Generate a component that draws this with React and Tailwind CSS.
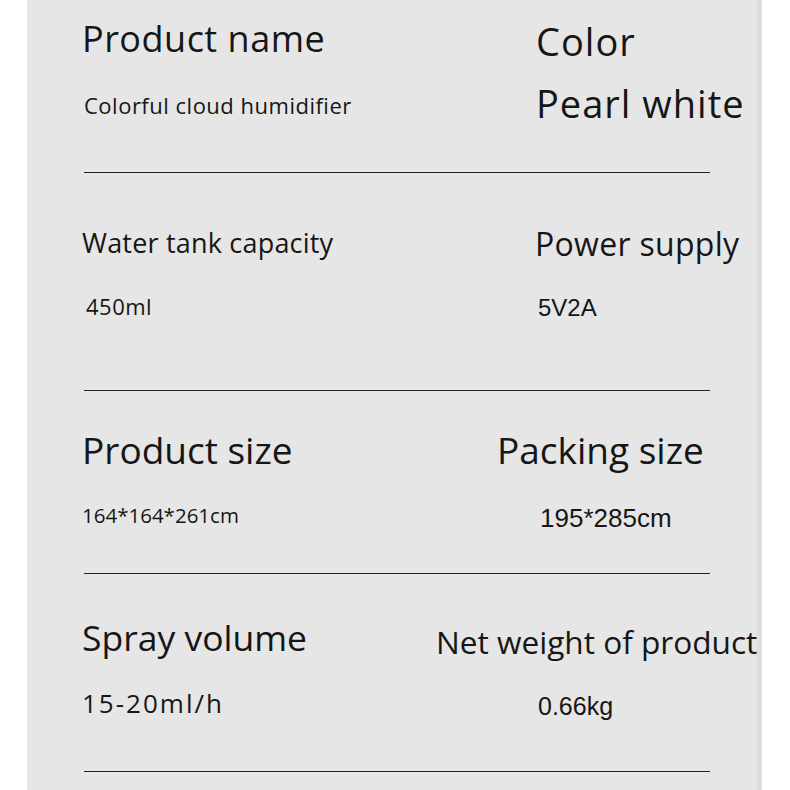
import React from 'react';

const specs = [
  {
    h: 'h-[172px]',
    left: { title: 'Product name', tCls: 'mt-[21px] text-[36px] tracking-[0.5px]', value: 'Colorful cloud humidifier', vCls: 'mt-[37px] ml-[2px] text-[22px] tracking-[0.5px]' },
    right: { title: 'Color', tCls: 'mt-[22px] ml-[100px] text-[38px] tracking-[1px]', value: 'Pearl white', vCls: 'mt-[24px] ml-[100px] text-[38px] tracking-[1px]', arial: false },
  },
  {
    h: 'h-[217px]',
    left: { title: 'Water tank capacity', tCls: 'mt-[56px] text-[27px] tracking-[0.2px]', value: '450ml', vCls: 'mt-[39px] ml-[4px] text-[22px] tracking-[0.5px]' },
    right: { title: 'Power supply', tCls: 'mt-[55px] ml-[99px] text-[32px] tracking-[0.3px]', value: '5V2A', vCls: 'mt-[36px] ml-[102px] text-[24px]', arial: true },
  },
  {
    h: 'h-[182px]',
    left: { title: 'Product size', tCls: 'mt-[40px] text-[37px]', value: '164*164*261cm', vCls: 'mt-[37px] text-[20.5px]' },
    right: { title: 'Packing size', tCls: 'mt-[40px] ml-[61px] text-[37px]', value: '195*285cm', vCls: 'mt-[37px] ml-[104px] text-[26px]', arial: true },
  },
  {
    h: 'h-[197px]',
    left: { title: 'Spray volume', tCls: 'mt-[46px] text-[35.5px]', value: '15-20ml/h', vCls: 'mt-[34px] text-[26px] tracking-[2px]' },
    right: { title: 'Net weight of product', tCls: 'mt-[52px] text-[31.6px]', value: '0.66kg', vCls: 'mt-[36px] ml-[102px] text-[25px]', arial: true },
  },
];

const sans = "font-['Open_Sans',sans-serif]";
const arial = "font-['Liberation_Sans',Arial,sans-serif]";

export default function App() {
  return (
    <div className="flex w-[790px] h-[790px] bg-white text-[#161616] overflow-hidden">
      <div className="w-[27px] shrink-0" />
      <div className="w-[735px] shrink-0 h-full bg-[#e6e6e6] border-r-[5px] border-[#dddddd] pl-[55px]">
        {specs.map((row, i) => (
          <div key={i}>
            <div className={`flex ${row.h}`}>
              <div className="w-[354px] shrink-0 flex flex-col items-start">
                <div className={`${sans} leading-none whitespace-nowrap ${row.left.tCls}`}>{row.left.title}</div>
                <div className={`${sans} leading-none whitespace-nowrap ${row.left.vCls}`}>{row.left.value}</div>
              </div>
              <div className="flex-1 flex flex-col items-start">
                <div className={`${sans} leading-none whitespace-nowrap ${row.right.tCls}`}>{row.right.title}</div>
                <div className={`${row.right.arial ? arial : sans} leading-none whitespace-nowrap ${row.right.vCls}`}>
                  {row.right.value}
                </div>
              </div>
            </div>
            <div className="ml-[2px] w-[626px] h-px bg-[#222222]" />
          </div>
        ))}
      </div>
    </div>
  );
}
